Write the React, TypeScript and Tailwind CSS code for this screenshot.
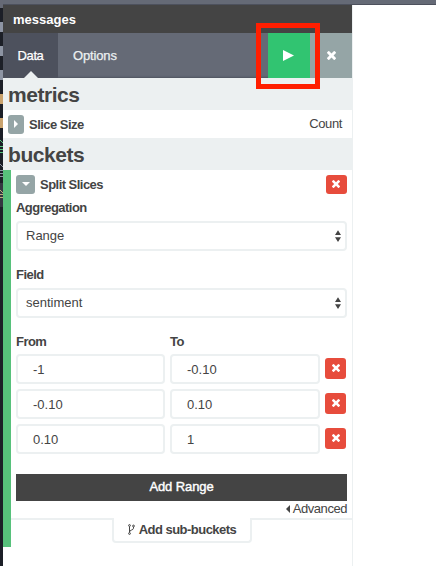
import type { ReactNode } from "react";

const ranges = [
  { from: "-1", to: "-0.10" },
  { from: "-0.10", to: "0.10" },
  { from: "0.10", to: "1" },
];

function Times({ className }: { className: string }) {
  return (
    <svg viewBox="110 366 1188 1188" className={className} fill="currentColor">
      <path d="M1298 1322q0 40-28 68l-136 136q-28 28-68 28t-68-28l-294-294-294 294q-28 28-68 28t-68-28l-136-136q-28-28-28-68t28-68l294-294-294-294q-28-28-28-68t28-68l136-136q28-28 68-28t68 28l294 294 294-294q28-28 68-28t68 28l136 136q28 28 28 68t-28 68l-294 294 294 294q28 28 28 68z" />
    </svg>
  );
}

function Label({ children, className = "" }: { children: ReactNode; className?: string }) {
  return <div className={`text-[13px] leading-[18px] font-bold tracking-[-0.53px] ${className}`}>{children}</div>;
}

function Select({ value }: { value: string }) {
  return (
    <div className="flex h-[30px] items-center justify-between rounded border-2 border-[#ecf0f1] pr-1 pl-2">
      <span>{value}</span>
      <svg viewBox="0 0 6 12" className="h-3 w-1.5" fill="#444">
        <path d="M3 .2 6 5H0ZM3 12 6 7.2H0Z" />
      </svg>
    </div>
  );
}

function Input({ value, className }: { value: string; className: string }) {
  return (
    <div className={`flex h-[30px] items-center rounded border-2 border-[#ecf0f1] pt-px pl-[15px] ${className}`}>
      {value}
    </div>
  );
}

function Backdrop() {
  return (
    <div className="h-[566px] w-[3px] shrink-0 bg-[#1c1f27]">
      <svg viewBox="0 0 3 566" className="h-[566px] w-[3px]">
        <path fill="#666a76" d="M0 0h3v8H0z" />
        <path fill="#8d94a3" d="M0 22h3v10H0zM0 46h3v10H0zM0 70h3v10H0z" />
        <path fill="#c9a26d" d="M0 94h3v10H0zM0 118h3v10H0z" />
        <g fill="none" strokeWidth="1">
          <path stroke="#57c17b" d="m0 140 3 3M0 146.5h3M0 149.5h3M0 152.5h3" />
          <path stroke="#8d94a3" d="m0 164 3 3M0 170.5h3M0 173.5h3M0 176.5h3" />
          <path fill="#343741" d="M0 183h3v24H0z" />
          <path stroke="#bfaf7c" d="m0 190 3 3M0 194.5h3M0 197.5h3" />
        </g>
      </svg>
    </div>
  );
}

export default function App() {
  return (
    <div className="relative flex h-[566px] w-[436px] overflow-hidden bg-white font-['Liberation_Sans',Arial,sans-serif] text-[13px] text-[#444]">
      <Backdrop />
      <div className="flex min-w-0 grow flex-col">
        <div className="h-[5px] shrink-0 border-b border-[#4d515d] bg-[#656a76]" />
        <div className="w-[350px] grow border-r border-[#ecf0f1]">
          <div className="flex h-7 items-center bg-[#444] pl-2.5 font-bold text-white">
            <span className="mt-px leading-4">messages</span>
          </div>
          <nav className="flex h-[45px] bg-[#656a76] text-white shadow-[inset_0_-2px_2px_-1px_#4f5360]">
            <div className="flex w-[55px] flex-col items-center bg-[#4d515d]">
              <span className="mt-[14px] text-[13px] leading-[18px] tracking-[-0.4px] [-webkit-text-stroke:0.25px]">Data</span>
              <svg viewBox="0 0 14 7" className="mt-auto h-[7px] w-3.5" fill="#ecf0f1">
                <path d="M7 0 14 7H0Z" />
              </svg>
            </div>
            <span className="mt-[14px] ml-[15px] text-[13px] leading-[18px] tracking-[-0.15px] text-[#ecf0f1] [-webkit-text-stroke:0.25px]">Options</span>
            <div className="ml-auto flex w-[42px] items-center justify-center bg-[#31c471]">
              <svg viewBox="0 0 11 11" className="mr-0.5 h-[11px] w-[11px]" fill="white">
                <path d="M0 0 11 5.5 0 11Z" />
              </svg>
            </div>
            <div className="flex w-[42px] items-center justify-center bg-[#95a5a6]">
              <Times className="h-[9px] w-[9px]" />
            </div>
          </nav>

          <h2 className="h-8 bg-[#ecf0f1] pl-[5px] text-[21px] leading-[33px] font-bold tracking-[-0.45px]">metrics</h2>
          <div className="flex h-7 items-center pr-2.5 pl-[5px]">
            <div className="flex h-[19px] w-4 items-center justify-center rounded-[3px] bg-[#95a5a6]">
              <svg viewBox="0 0 4 8" className="h-2 w-1" fill="white">
                <path d="M0 0 4 4 0 8Z" />
              </svg>
            </div>
            <Label className="mt-px ml-[5px]">Slice Size</Label>
            <span className="ml-auto tracking-[-0.4px]">Count</span>
          </div>
          <h2 className="h-8 bg-[#ecf0f1] pl-[5px] text-[21px] leading-[33px] font-bold tracking-[-0.45px]">buckets</h2>

          <div className="h-[377px] border-l-8 border-[#57c17b]">
            <div className="h-[348px] px-[5px] pt-[5px]">
              <div className="flex h-[19px] items-center">
                <div className="flex h-[19px] w-[19px] items-center justify-center rounded-[3px] bg-[#95a5a6]">
                  <svg viewBox="0 0 8 4" className="mb-px h-1 w-2" fill="white">
                    <path d="M0 0h8L4 4Z" />
                  </svg>
                </div>
                <Label className="ml-[5px]">Split Slices</Label>
                <div className="ml-auto flex h-[19px] w-[21px] items-center justify-center rounded-[3px] bg-[#e74c3c] text-white">
                  <Times className="mr-px mb-px h-2 w-2" />
                </div>
              </div>
              <Label className="mt-[5px] mb-1">Aggregation</Label>
              <Select value="Range" />
              <Label className="mt-[15px] mb-1">Field</Label>
              <Select value="sentiment" />
              <div className="mt-[15px] mb-[3px] flex">
                <Label className="w-[154px]">From</Label>
                <Label>To</Label>
              </div>
              <div className="flex flex-col gap-[5px]">
                {ranges.map((range) => (
                  <div key={range.from} className="flex gap-[5px]">
                    <Input value={range.from} className="w-[149px]" />
                    <Input value={range.to} className="w-[150px]" />
                    <div className="mt-1 flex h-[21px] w-[21px] items-center justify-center rounded-[3px] bg-[#e74c3c] text-white">
                      <Times className="mb-px h-2 w-2" />
                    </div>
                  </div>
                ))}
              </div>
              <div className="mt-5 h-[27px] bg-[#444] text-center text-[13px] leading-[26px] tracking-[-0.1px] text-white [-webkit-text-stroke:0.4px]">
                Add Range
              </div>
              <div className="flex h-4 items-center justify-end gap-[3px]">
                <svg viewBox="0 0 4 8" className="h-2 w-1" fill="#444">
                  <path d="M4 0v8L0 4Z" />
                </svg>
                <span className="leading-4 tracking-[-0.45px]">Advanced</span>
              </div>
            </div>
            <div className="flex h-[25px]">
              <div className="w-[101px] border-t-2 border-[#ecf0f1]" />
              <div className="flex w-[140px] items-center justify-center gap-1 rounded-b border-2 border-t-0 border-[#ecf0f1]">
                <svg viewBox="0 0 7 11" className="h-[11px] w-[7px]" fill="none" stroke="#444">
                  <circle cx="1.5" cy="1.5" r=".9" />
                  <circle cx="5.5" cy="2" r=".9" />
                  <circle cx="1.5" cy="9.5" r=".9" />
                  <path d="M1.5 2.5v6M5.5 3v1.2C5.5 6.3 1.5 5.8 1.5 8" />
                </svg>
                <span className="font-bold tracking-[-0.53px]">Add sub-buckets</span>
              </div>
              <div className="grow border-t-2 border-[#ecf0f1]" />
            </div>
          </div>
        </div>
      </div>
      <div className="pointer-events-none absolute top-[23px] left-[256px] h-[66px] w-16 border-[5px] border-[#ff1e00]" />
    </div>
  );
}
